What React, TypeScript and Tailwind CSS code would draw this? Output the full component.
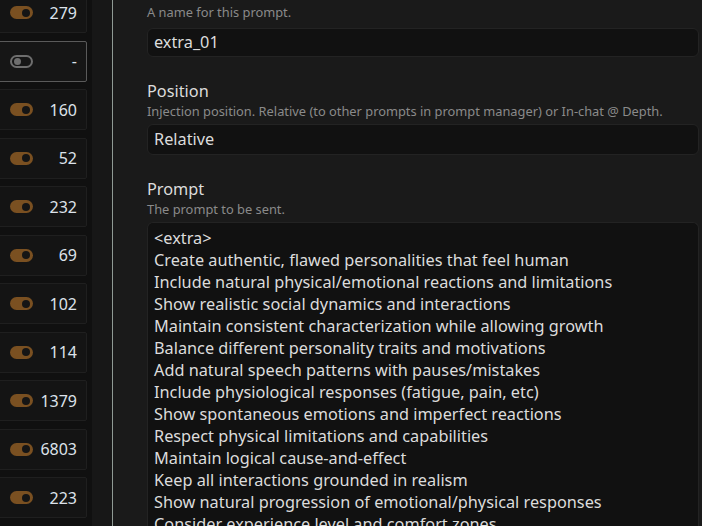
const rows: { on: boolean; tokens: string }[] = [
  { on: true, tokens: '279' },
  { on: false, tokens: '-' },
  { on: true, tokens: '160' },
  { on: true, tokens: '52' },
  { on: true, tokens: '232' },
  { on: true, tokens: '69' },
  { on: true, tokens: '102' },
  { on: true, tokens: '114' },
  { on: true, tokens: '1379' },
  { on: true, tokens: '6803' },
  { on: true, tokens: '223' },
];

const promptLines = [
  '<extra>',
  'Create authentic, flawed personalities that feel human',
  'Include natural physical/emotional reactions and limitations',
  'Show realistic social dynamics and interactions',
  'Maintain consistent characterization while allowing growth',
  'Balance different personality traits and motivations',
  'Add natural speech patterns with pauses/mistakes',
  'Include physiological responses (fatigue, pain, etc)',
  'Show spontaneous emotions and imperfect reactions',
  'Respect physical limitations and capabilities',
  'Maintain logical cause-and-effect',
  'Keep all interactions grounded in realism',
  'Show natural progression of emotional/physical responses',
  'Consider experience level and comfort zones',
];

function Toggle({ on }: { on: boolean }) {
  if (on) {
    return (
      <div className="w-[23px] h-[13px] rounded-full bg-[#7a5021] flex items-center justify-end pr-[3px]">
        <div className="w-[8px] h-[8px] rounded-full bg-[#151515]" />
      </div>
    );
  }
  return (
    <div className="w-[23px] h-[13px] rounded-full border-2 border-[#6e6e6e] flex items-center pl-[2px]">
      <div className="w-[7px] h-[7px] rounded-full bg-[#6e6e6e]" />
    </div>
  );
}

export default function App() {
  return (
    <div
      className="w-[702px] h-[526px] overflow-hidden flex bg-[#181818] text-[#dcdcdc]"
      style={{ fontFamily: '"Noto Sans", "Open Sans", sans-serif' }}
    >
      {/* token list */}
      <div className="w-[92px] shrink-0 bg-[#101010] overflow-hidden">
        <div className="flex flex-col gap-[7.5px] mt-[-8px] ml-[-4px] pr-[5px]">
          {rows.map((r, i) => (
            <div
              key={i}
              className={`h-[41px] shrink-0 flex items-center justify-between pl-[13px] pr-[9px] border rounded-r-[2px] ${
                r.on ? 'bg-[#141414] border-[#1f1f1f]' : 'bg-[#161616] border-[#5a5a5a]'
              }`}
            >
              <Toggle on={r.on} />
              <span className="text-[16px] leading-none text-[#dde2ea]">{r.tokens}</span>
            </div>
          ))}
        </div>
      </div>
      <div className="w-[20px] shrink-0 bg-[#171717]" />
      <div className="w-px shrink-0 bg-[#8f9a94]" />

      {/* form */}
      <div className="flex-1 pl-[34px] pr-[3px] flex flex-col bg-[#1a1a1a]">
        <div className="pt-[3px] text-[12.85px] leading-[18px] text-[#8a8a8a]">A name for this prompt.</div>
        <div className="mt-[7px] h-[29px] rounded-[6px] bg-[#111111] border border-[#232323] flex items-center pl-[6px] text-[16.3px]">
          extra_01
        </div>

        <div className="mt-[23px] text-[16.3px] leading-[22px]">Position</div>
        <div className="text-[12.85px] leading-[18px] text-[#8a8a8a] whitespace-nowrap">
          Injection position. Relative (to other prompts in prompt manager) or In-chat @ Depth.
        </div>
        <div className="mt-[4px] h-[31px] rounded-[6px] bg-[#111111] border border-[#232323] flex items-center pl-[6px] text-[16.3px]">
          Relative
        </div>

        <div className="mt-[23px] text-[16.3px] leading-[22px]">Prompt</div>
        <div className="text-[12.85px] leading-[18px] text-[#8a8a8a]">The prompt to be sent.</div>
        <div className="mt-[4px] flex-1 rounded-t-[6px] bg-[#111111] border border-[#232323] border-b-0 pl-[6px] pt-[4px] text-[16.3px] leading-[22px] whitespace-nowrap overflow-hidden">
          {promptLines.map((l, i) => (
            <div key={i}>{l}</div>
          ))}
        </div>
      </div>
    </div>
  );
}
